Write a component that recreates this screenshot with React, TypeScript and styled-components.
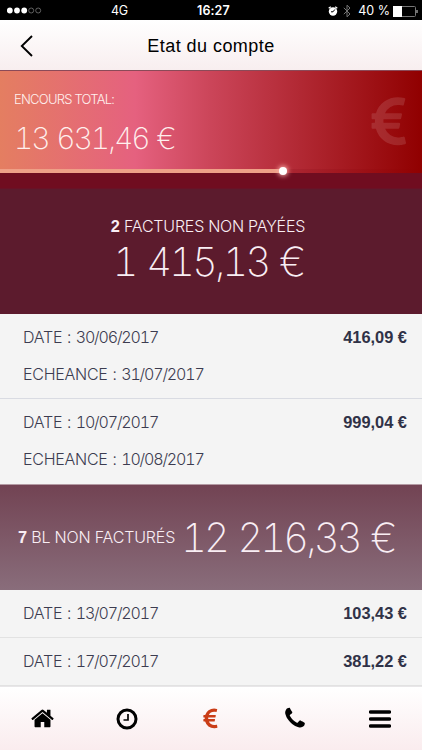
import React from 'react';
import styled, { createGlobalStyle } from 'styled-components';

const GlobalStyle = createGlobalStyle`
  * { box-sizing: border-box; }
  body { margin: 0; background: #f4f4f4; }
`;

const Screen = styled.main`
  width: 422px;
  height: 750px;
  overflow: hidden;
  display: flex;
  flex-direction: column;
  background: #f4f4f4;
  font-family: 'Liberation Sans', Arial, sans-serif;
  color: #000;
`;

const StatusBar = styled.header`
  flex: none;
  height: 20px;
  display: grid;
  grid-template-columns: 110px 1fr 110px 97px;
  align-items: center;
  background: #000;
  color: #fff;
  font: 12.5px/20px Inter, sans-serif;
  padding: 1px 4px 0 7px;
  white-space: nowrap;
`;

const Signal = styled.svg`
  display: block;
  width: 36px;
  height: 8px;
`;

const Network = styled.span`
  margin-left: -6px;
  letter-spacing: -0.2px;
`;

const Clock = styled.strong`
  font-weight: 600;
  letter-spacing: 0.1px;
  margin-left: -14px;
`;

const DeviceState = styled.div`
  display: flex;
  align-items: center;
  justify-content: flex-end;
`;

const Glyph = styled.svg<{ $w: number; $h: number; $gap?: number }>`
  display: block;
  flex: none;
  width: ${p => p.$w}px;
  height: ${p => p.$h}px;
  margin-right: ${p => p.$gap ?? 0}px;
`;

const Battery = styled.span`
  margin-right: 3px;
`;

const TitleBar = styled.nav`
  flex: none;
  height: 51px;
  display: grid;
  grid-template-columns: 60px 1fr 60px;
  align-items: center;
  background: linear-gradient(#fff, #f8eeef);
  border-bottom: 1px solid #8b4a58;
`;

const BackButton = styled.button`
  border: 0;
  padding: 1px 0 0 20px;
  background: none;
`;

const Title = styled.h1`
  margin: 0;
  padding-top: 2px;
  font-size: 18px;
  font-weight: 400;
  line-height: 20px;
  letter-spacing: 0.45px;
  text-align: center;
`;

const Light = styled.span<{ $size: number; $track?: number; $word?: number; $weight?: number }>`
  font-family: Inter, sans-serif;
  font-weight: ${p => p.$weight ?? 300};
  font-size: ${p => p.$size}px;
  font-variant-numeric: tabular-nums;
  line-height: 1.2;
  letter-spacing: ${p => p.$track ?? 0}px;
  word-spacing: ${p => p.$word ?? 0}px;
  white-space: nowrap;

  b { font: bold 16.4px 'Liberation Sans', sans-serif; letter-spacing: 0; }
`;

const DateValue = styled.span`
  letter-spacing: -1.15px;
`;

const Summary = styled.section`
  flex: none;
  height: 98px;
  display: flex;
  justify-content: space-between;
  padding: 20px 15px 0 14px;
  background: linear-gradient(90deg, #e47e61 0, #e5617f 32%, #cb4559 50%, #a91f27 78%, #900000 100%);
  color: #fff0ee;
`;

const SummaryText = styled.div`
  display: flex;
  flex-direction: column;
  gap: 12px;
  padding-top: 1px;
`;

const Gauge = styled.div`
  flex: none;
  height: 20px;
  display: flex;
  align-items: flex-start;
  background: linear-gradient(90deg, #cb4559 0, #aa2430 70%, #900000 100%) top / 100% 4px no-repeat, #700d20;
  border-bottom: 1px solid #691226;
`;

const GaugeFill = styled.div`
  width: 283px;
  height: 4px;
  background: #efa087;
`;

const GaugeKnob = styled.div`
  width: 8px;
  height: 8px;
  margin: -2px 0 0 -4px;
  border-radius: 50%;
  background: #fff;
  box-shadow: 0 0 5px 1px #ffb5b0;
`;

const UnpaidPanel = styled.section`
  flex: none;
  height: 125px;
  display: flex;
  flex-direction: column;
  align-items: center;
  gap: 2px;
  padding: 28px 6px 0 0;
  background: #5c1b2d;
  color: #f9eef4;
`;

const DeliveryPanel = styled(UnpaidPanel)`
  height: 106px;
  flex-direction: row;
  align-items: center;
  padding: 0 0 0 18px;
  gap: 6px;
  background: linear-gradient(#724353, #896d7b);
  border-top: 1px solid #b39aa3;
`;

const Row = styled.article<{ $h: number; $line?: string }>`
  flex: none;
  height: ${p => p.$h}px;
  display: flex;
  justify-content: space-between;
  padding: 14px 15px 0 23px;
  border-bottom: ${p => (p.$line ? `1px solid ${p.$line}` : '0')};
  background: #f4f4f4;
  color: #3c3c50;
`;

const Dates = styled.div`
  display: flex;
  flex-direction: column;
  gap: 18px;
`;

const Amount = styled.strong`
  font-size: 16.4px;
  line-height: 19px;
  color: #303247;
`;

const TabBar = styled.nav`
  flex: none;
  height: 64px;
  display: grid;
  grid-template-columns: repeat(5, 1fr);
  background: linear-gradient(#fff, #faecee);
  border-top: 1px solid #e8e6e8;
`;

const Tab = styled.button<{ $active?: boolean }>`
  display: flex;
  align-items: center;
  justify-content: center;
  border: 0;
  padding: 0;
  background: none;
  color: ${p => (p.$active ? '#ca3d17' : '#000')};
`;

const EURO = 'M976 1363l35 159q3 12-3 22.5t-17 14.5l-5 1q-4 2-10.5 3.5t-16 4.5-21.5 5.5-25.5 5-30 5-33.5 4.5-36.5 3-38.5 1q-234 0-409-130.5t-238-351.5h-95q-13 0-22.5-9.5t-9.5-22.5v-113q0-13 9.5-22.5t22.5-9.5h66q-2-57 1-105h-67q-14 0-23-9t-9-23v-114q0-14 9-23t23-9h98q67-210 243.5-338t400.5-128q102 0 194 23 11 3 20 15 6 11 3 24l-43 159q-3 13-14 19.5t-24 2.5l-4-1q-4-1-11.5-2.5l-17.5-3.5-22.5-3.5-26-3-29-2.5-29.5-1q-126 0-226 64t-150 176h468q16 0 25 12 10 12 7 26l-24 114q-5 26-32 26h-488q-3 37 0 105h459q15 0 25 12 9 12 6 27l-24 112q-2 11-11 18.5t-20 7.5h-387q48 117 149.5 185.5t228.5 68.5q18 0 36-1.5t33.5-3.5 29.5-4.5 24.5-5 18.5-4.5l12-3 5-2q13-5 26 2 12 7 15 21z';
const HOME = 'M1408 992v480q0 26-19 45t-45 19h-384v-384h-256v384h-384q-26 0-45-19t-19-45v-480q0-1 .5-3t.5-3l575-474 575 474q1 2 1 6zm223-69l-62 74q-8 9-21 11h-3q-13 0-21-7l-692-577-692 577q-12 8-24 7-13-2-21-11l-62-74q-8-10-7-23.5t11-21.5l719-599q32-26 76-26t76 26l244 204v-195q0-14 9-23t23-9h192q14 0 23 9t9 23v408l219 182q10 8 11 21.5t-7 23.5z';
const PHONE = 'M1408 1240q0 27-10 70.5t-21 68.5q-21 50-122 106-94 51-186 51-27 0-52.5-3.5t-57.5-12.5-47.5-14.5-55.5-20.5-49-18q-98-35-175-83-128-79-264.5-215.5t-215.5-264.5q-48-77-83-175-3-9-18-49t-20.5-55.5-14.5-47.5-12.5-57.5-3.5-52.5q0-92 51-186 56-101 106-122 25-11 68.5-21t70.5-10q14 0 21 3 18 6 53 76 11 19 30 54t35 63.5 31 53.5q3 4 17.5 25t21.5 35.5 7 28.5q0 20-28.5 50t-62 55-62 53-28.5 46q0 9 5 22.5t8.5 20.5 14 24 11.5 19q76 137 174 235t235 174q2 1 19 11.5t24 14 20.5 8.5 22.5 5q18 0 46-28.5t53-62 55-62 50-28.5q14 0 28.5 7t35.5 21.5 25 17.5q25 15 53.5 31t63.5 35 54 30q70 35 76 53 3 7 3 21z';

const invoices = [
  { date: '30/06/2017', due: '31/07/2017', amount: '416,09 €', h: 85, line: '#d9dbe2' },
  { date: '10/07/2017', due: '10/08/2017', amount: '999,04 €', h: 85, line: undefined },
];

const deliveries = [
  { date: '13/07/2017', amount: '103,43 €' },
  { date: '17/07/2017', amount: '381,22 €' },
];

function DateLine({ label, value }: { label: string; value: string }) {
  return (
    <Light $size={16} $track={-0.25} $word={0.7}>
      {label} : <DateValue>{value}</DateValue>
    </Light>
  );
}

export default function App() {
  return (
    <>
      <GlobalStyle />
      <Screen>
        <StatusBar>
          <Signal viewBox="0 0 36 8">
            {[2.8, 10, 17.2].map(x => <circle key={x} cx={x} cy="3.5" r="2.9" fill="#fff" />)}
            {[24.2, 31.2].map(x => <circle key={x} cx={x} cy="3.5" r="2.5" fill="none" stroke="#888" strokeWidth=".7" />)}
          </Signal>
          <Network>4G</Network>
          <Clock>16:27</Clock>
          <DeviceState>
            <Glyph $w={10} $h={11} $gap={5} viewBox="0 0 10 11">
              <circle cx="5" cy="5.5" r="4.2" fill="#fff" />
              <path d="M.7 2.3 2.8.7M9.3 2.3 7.2.7" stroke="#fff" strokeWidth="1.3" />
              <path d="M6.8 3.5 5 5.8H3" fill="none" stroke="#000" strokeWidth="1" />
            </Glyph>
            <Glyph $w={8} $h={14} $gap={7} viewBox="0 0 8 14">
              <path d="M.8 3.8 7 10 4 12.8V1.2L7 4 .8 10.2" fill="none" stroke="#777" strokeWidth="1" />
            </Glyph>
            <Battery>40 %</Battery>
            <Glyph $w={25} $h={11} viewBox="0 0 25 11">
              <rect x=".5" y=".5" width="22" height="10" rx="1" fill="none" stroke="#777" />
              <rect width="9" height="11" fill="#fff" />
              <path d="M24 4v3" stroke="#ddd" />
            </Glyph>
          </DeviceState>
        </StatusBar>

        <TitleBar>
          <BackButton aria-label="Retour">
            <Glyph $w={13} $h={22} viewBox="0 0 13 22">
              <path d="M12 1 1.8 11 12 21" fill="none" stroke="#000" strokeWidth="1.9" />
            </Glyph>
          </BackButton>
          <Title>Etat du compte</Title>
        </TitleBar>

        <Summary>
          <SummaryText>
            <Light $size={13} $track={-0.75}>ENCOURS TOTAL:</Light>
            <Light $size={30} $weight={250} $track={-2.15} $word={2}>13 631,46 €</Light>
          </SummaryText>
          <Glyph $w={36} $h={61} viewBox="0 0 1024 1792">
            <path d={EURO} fill="#fff" opacity=".12" />
          </Glyph>
        </Summary>
        <Gauge>
          <GaugeFill />
          <GaugeKnob />
        </Gauge>

        <UnpaidPanel>
          <Light $size={16} $track={-0.2}><b>2</b> FACTURES NON PAYÉES</Light>
          <Light $size={40} $weight={250} $track={-3} $word={3}>1 415,13 €</Light>
        </UnpaidPanel>
        {invoices.map(item => (
          <Row key={item.date} $h={item.h} $line={item.line}>
            <Dates>
              <DateLine label="DATE" value={item.date} />
              <DateLine label="ECHEANCE" value={item.due} />
            </Dates>
            <Amount>{item.amount}</Amount>
          </Row>
        ))}

        <DeliveryPanel>
          <Light $size={16} $track={-0.15}><b>7</b> BL NON FACTURÉS</Light>
          <Light $size={40} $weight={250} $track={-3} $word={3}>12 216,33 €</Light>
        </DeliveryPanel>
        {deliveries.map(item => (
          <Row key={item.date} $h={48} $line="#e2e2e2">
            <DateLine label="DATE" value={item.date} />
            <Amount>{item.amount}</Amount>
          </Row>
        ))}

        <TabBar>
          <Tab aria-label="Accueil">
            <Glyph $w={23} $h={25} viewBox="0 0 1664 1792"><path d={HOME} fill="currentColor" /></Glyph>
          </Tab>
          <Tab aria-label="Historique">
            <Glyph $w={22} $h={22} viewBox="0 0 22 22">
              <circle cx="11" cy="11" r="9" fill="none" stroke="currentColor" strokeWidth="3" />
              <path d="M12 6v6H7.5" fill="none" stroke="currentColor" strokeWidth="1.7" />
            </Glyph>
          </Tab>
          <Tab aria-label="Compte" $active>
            <Glyph $w={15} $h={25} viewBox="0 0 1024 1792"><path d={EURO} fill="currentColor" /></Glyph>
          </Tab>
          <Tab aria-label="Téléphone">
            <Glyph $w={20} $h={25} viewBox="0 0 1408 1792"><path d={PHONE} fill="currentColor" /></Glyph>
          </Tab>
          <Tab aria-label="Menu">
            <Glyph $w={22} $h={18} viewBox="0 0 22 18">
              <path d="M1.5 2h19M1.5 9h19M1.5 16h19" stroke="currentColor" strokeWidth="3.4" strokeLinecap="round" />
            </Glyph>
          </Tab>
        </TabBar>
      </Screen>
    </>
  );
}
